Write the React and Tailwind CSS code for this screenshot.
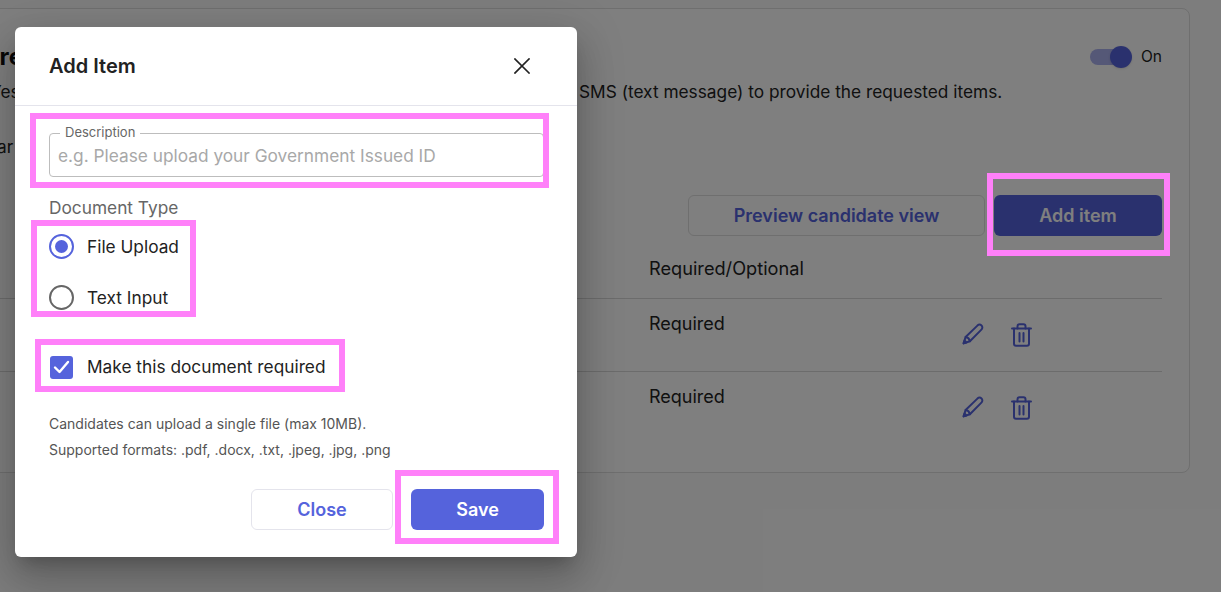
function PencilIcon() {
  return (
    <svg width="22" height="22" viewBox="0 0 22 22" fill="none" stroke="#5563DC" strokeWidth="2" strokeLinejoin="round" strokeLinecap="round">
      <path d="M1.6 20.4 3.6 14 15.4 2.6c1.3-1.2 3-1.2 4.1-.1 1.2 1.2 1.1 2.9-.1 4.1L7.9 18.2Z" />
      <path d="M3.6 14c1.900.3 3.800 2 4.300 4.200" />
      <path d="M1.600 20.400 4.500 19.500 2.500 17.500Z" fill="#5563DC" />
    </svg>
  );
}

function TrashIcon() {
  return (
    <svg width="21" height="24" viewBox="0 0 21 24" fill="none" stroke="#5563DC" strokeWidth="2" strokeLinecap="round" strokeLinejoin="round">
      <path d="M1 5.500h19" />
      <path d="M6.500 5.500V3.200C6.500 2 7.300 1.200 8.500 1.200h4c1.200 0 2 .8 2 2v2.300" />
      <path d="M3 5.500v15.300c0 1.200.8 2 2 2h11c1.200 0 2-.8 2-2V5.500" />
      <path d="M8.500 10v8.500M12.500 10v8.500" />
    </svg>
  );
}

function ItemRow() {
  return (
    <div className="grid grid-cols-[661px_311px_1fr] h-[73px] border-b border-[#d9d9d9] last:border-b-0">
      <div />
      <div className="pt-[13px] text-[18px] leading-[24px] text-[#222]">Required</div>
      <div className="flex items-start gap-[27px] pl-[2px] pt-[24px]">
        <PencilIcon />
        <TrashIcon />
      </div>
    </div>
  );
}

function Highlight({ className }) {
  return <div className={`absolute border-[6px] border-[#ff80f9] ${className}`} />;
}

export default function App() {
  return (
    <div className="relative h-[592px] w-full overflow-hidden bg-[#fbfbfb] pt-[8px] font-['Inter',sans-serif]">
      {/* page behind the dialog */}
      <div className="ml-[-60px] h-[465px] w-[1250px] rounded-lg border border-[#dedede] bg-white pl-[47px] pr-[27px]">
        <div className="flex items-start justify-between pt-[33px]">
          <h2 className="ml-[-4px] mt-[-3px] text-[24px] font-bold leading-[36px] text-[#111]">Pre</h2>
          <div className="flex items-center gap-[10px] pt-[5px]">
            <div className="relative h-[16px] w-[31px] rounded-full bg-[#aab0ee]">
              <div className="absolute right-[-11px] top-[-3px] h-[22px] w-[22px] rounded-full bg-[#5563DC] shadow" />
            </div>
            <span className="ml-[10px] text-[15.500px] leading-[20px] text-[#222]">On</span>
          </div>
        </div>
        <p className="mt-[5px] flex text-[17.300px] leading-[24px] text-[#222]">
          <span className="ml-[2px] w-[589px]">Yes</span>
          <span>SMS (text message) to provide the requested items.</span>
        </p>
        <p className="ml-[-18px] mt-[31px] text-[17.300px] leading-[24px] text-[#222]">Clear</p>
        <div className="mt-[36px] flex justify-end gap-[9px]">
          <button className="h-[41px] w-[297px] rounded-md border border-[#dedede] bg-white text-[18px] font-semibold text-[#5563DC]">
            Preview candidate view
          </button>
          <button className="h-[41px] w-[168px] rounded-md bg-[#5563DC] text-[18px] font-semibold text-white">
            Add item
          </button>
        </div>
        <div className="grid h-[63px] grid-cols-[661px_1fr] border-b border-[#d9d9d9] pt-[20px]">
          <div />
          <div className="text-[18.200px] font-normal leading-[24px] text-[#222]">Required/Optional</div>
        </div>
        <ItemRow />
        <ItemRow />
      </div>

      <div className="absolute inset-0 bg-black/50" />

      {/* dialog */}
      <div className="absolute left-[15px] top-[27px] h-[530px] w-[562px] rounded-md bg-white shadow-[0_11px_15px_-7px_rgba(0,0,0,0.2),0_24px_38px_3px_rgba(0,0,0,0.14),0_9px_46px_8px_rgba(0,0,0,0.12)]">
        <div className="flex h-[79px] items-center justify-between border-b border-[#e4e4ec] pl-[34px] pr-[47px]">
          <h3 className="text-[20px] font-semibold text-[#222]">Add Item</h3>
          <svg width="16" height="16" viewBox="0 0 16 16" fill="none" stroke="#222" strokeWidth="1.700" strokeLinecap="square">
            <path d="M1 1l14 14M15 1 1 15" />
          </svg>
        </div>

        <div className="pl-[34px] pr-[33px]">
          <div className="relative mt-[27px] h-[44px] w-full rounded-[4px] border border-[#bdbdbd] px-[8px]">
            <label className="absolute left-[10px] top-[-10px] bg-white px-[5px] text-[13px] leading-[16px] text-[#666]">
              Description
            </label>
            <input
              className="h-full w-full bg-transparent text-[17.300px] outline-none placeholder:text-[#a8a8a8]"
              placeholder="e.g. Please upload your Government Issued ID"
            />
          </div>

          <div className="mt-[19px] text-[17.300px] leading-[24px] text-[#666]">Document Type</div>

          <div className="mt-[14px] flex h-[25px] items-center gap-[13px]">
            <span className="flex h-[25px] w-[25px] items-center justify-center rounded-full border-[2.500px] border-[#5563DC]">
              <span className="h-[13px] w-[13px] rounded-full bg-[#5563DC]" />
            </span>
            <span className="text-[17.300px] text-[#222]">File Upload</span>
          </div>
          <div className="mt-[26px] flex h-[25px] items-center gap-[13px]">
            <span className="h-[25px] w-[25px] rounded-full border-[2.500px] border-[#666]" />
            <span className="text-[17.300px] text-[#222]">Text Input</span>
          </div>

          <div className="mt-[45px] flex h-[24px] items-center gap-[14px] pl-[1px]">
            <span className="flex h-[23px] w-[23px] items-center justify-center rounded-[3px] bg-[#5563DC]">
              <svg width="17" height="14" viewBox="0 0 17 14" fill="none" stroke="#fff" strokeWidth="2.400" strokeLinecap="round" strokeLinejoin="round">
                <path d="M2 7.500 6.500 12 15 2" />
              </svg>
            </span>
            <span className="text-[17.300px] text-[#222]">Make this document required</span>
          </div>

          <p className="mt-[32px] text-[14px] leading-[26px] text-[#555]">
            Candidates can upload a single file (max 10MB).
            <br />
            Supported formats: .pdf, .docx, .txt, .jpeg, .jpg, .png
          </p>

          <div className="mt-[26px] flex justify-end gap-[18px]">
            <button className="h-[41px] w-[142px] rounded-md border border-[#e4e4ec] bg-white text-[18px] font-semibold text-[#5563DC]">
              Close
            </button>
            <button className="h-[41px] w-[133px] rounded-md bg-[#5563DC] text-[18px] font-semibold text-white">
              Save
            </button>
          </div>
        </div>
      </div>

      {/* annotation boxes */}
      <Highlight className="left-[30px] top-[113px] h-[75px] w-[519px]" />
      <Highlight className="left-[31px] top-[220px] h-[97px] w-[165px]" />
      <Highlight className="left-[35px] top-[339px] h-[53px] w-[310px]" />
      <Highlight className="left-[395px] top-[470px] h-[74px] w-[164px]" />
      <Highlight className="left-[987px] top-[173px] h-[83px] w-[183px]" />
    </div>
  );
}
